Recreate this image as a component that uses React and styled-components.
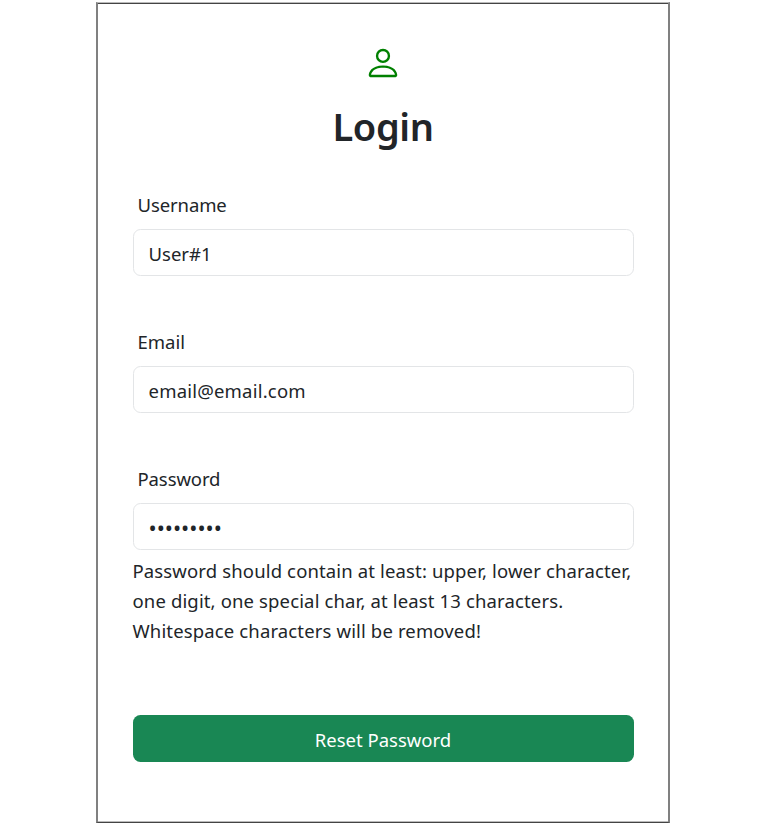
import React from "react";
import styled, { createGlobalStyle } from "styled-components";

const Global = createGlobalStyle`
  *, *::before, *::after { box-sizing: border-box; }
  body {
    margin: 0;
    background: #fff;
    color: #212529;
    font-family: "Segoe UI", "Noto Sans", "Open Sans", sans-serif;
    font-size: 20px;
    line-height: 30px;
  }
`;

const Page = styled.main`
  display: flex;
  padding: 2px 0 0 96px;
  height: 827px;
`;

const Card = styled.form`
  width: 574px;
  height: 821px;
  padding: 41px 34.5px 0;
  border: 2px solid #808080;
  border-top: 1px solid #bbb;
  border-bottom: 1px solid #444;
  box-shadow: inset 0 1px #444, inset 0 -1px #bbb;
  display: flex;
  flex-direction: column;
`;

const UserIcon = styled.svg`
  display: block;
  width: 38px;
  height: 38px;
  margin: 0 auto;
  fill: #008000;
`;

const Title = styled.h1`
  margin: 20px 0 0;
  text-align: center;
  font-size: 40px;
  line-height: 48px;
  font-weight: 600;
`;

const Text = styled.span`
  display: inline-block;
  white-space: nowrap;
  font-size: ${(p) => p.$size || 18.5}px;
  letter-spacing: ${(p) => p.$track || 0}px;
`;

const Field = styled.div`
  display: flex;
  flex-direction: column;
  margin-top: ${(p) => p.$gap || 51}px;
`;

const Label = styled.label`
  height: 30px;
  padding-left: 5px;
  margin-bottom: 9px;
`;

const Input = styled.input`
  width: 501px;
  height: 47px;
  padding: 1px 15px 0;
  border: 1px solid #e3e5e7;
  border-radius: 7.5px;
  background: #fff;
  color: #212529;
  font-family: inherit;
  font-size: ${(p) => (p.type === "password" ? 21.7 : 18.5)}px;
  letter-spacing: ${(p) => p.$track || 0}px;
  outline: none;
`;

const Hint = styled.div`
  margin-top: 6px;
  display: flex;
  flex-direction: column;
  align-items: flex-start;
`;

const Submit = styled.button`
  width: 501px;
  height: 47px;
  margin-top: 69px;
  padding: 2px 0 0;
  border: 0;
  border-radius: 7.5px;
  background: #198754;
  color: #fff;
  font-family: inherit;
`;

export default function App() {
  return (
    <>
      <Global />
      <Page>
        <Card onSubmit={(e) => e.preventDefault()}>
          <UserIcon viewBox="0 0 16 16" aria-hidden="true">
            <path d="M8 8a3 3 0 1 0 0-6 3 3 0 0 0 0 6m2-3a2 2 0 1 1-4 0 2 2 0 0 1 4 0m4 8c0 1-1 1-1 1H3s-1 0-1-1 1-4 6-4 6 3 6 4m-1-.004c-.001-.246-.154-.986-.832-1.664C11.516 10.68 10.289 10 8 10s-3.516.68-4.168 1.332c-.678.678-.83 1.418-.832 1.664z" />
          </UserIcon>
          <Title><Text $size={38} $track={-0.4}>Login</Text></Title>
          <Field $gap={40}>
            <Label htmlFor="username"><Text $track={-0.1}>Username</Text></Label>
            <Input id="username" defaultValue="User#1" />
          </Field>
          <Field>
            <Label htmlFor="email"><Text>Email</Text></Label>
            <Input id="email" defaultValue="email@email.com" $track={0.2} />
          </Field>
          <Field>
            <Label htmlFor="password"><Text $track={-0.1}>Password</Text></Label>
            <Input id="password" type="password" defaultValue="Passw0rd!" />
          </Field>
          <Hint>
            <Text $track={0.14}>Password should contain at least: upper, lower character,</Text>
            <Text $track={0.14}>one digit, one special char, at least 13 characters.</Text>
            <Text $track={0.14}>Whitespace characters will be removed!</Text>
          </Hint>
          <Submit type="submit"><Text>Reset Password</Text></Submit>
        </Card>
      </Page>
    </>
  );
}
